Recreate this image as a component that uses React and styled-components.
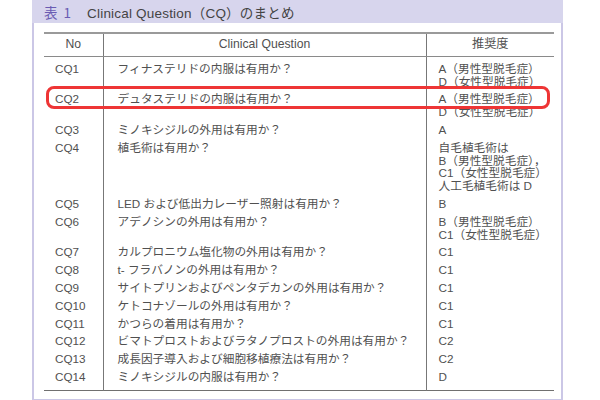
import React from "react";
import styled, { createGlobalStyle } from "styled-components";

const Global = createGlobalStyle`
  html, body { margin: 0; padding: 0; background: #fff; }
  body { font-family: "Liberation Sans", "Noto Sans CJK JP", sans-serif; }
`;

const Frame = styled.div`
  box-sizing: border-box;
  margin-left: 32px;
  width: 531px;
  border: 2px solid #cbc7e6;
  border-top: none;
  background: #fff;
  padding-bottom: 8px;
`;

const TitleBar = styled.div`
  height: 23px;
  background: #d7d5ed;
  display: flex;
  align-items: center;
  margin: 0 -2px;
  padding-left: 12px;
  font-size: 13.5px;
  color: #444;
`;

const TitleNo = styled.span`
  color: #6a5bb2;
  margin-right: 16px;
  font-family: "Noto Sans CJK JP", sans-serif;
  word-spacing: 3px;
`;

const TitleText = styled.span`
  font-family: "Liberation Sans", "Noto Sans CJK JP", sans-serif;
  letter-spacing: 0.2px;
`;

const TableWrap = styled.div`
  position: relative;
  margin: 9px 7px 0 10px;
`;

const Table = styled.table`
  width: 510px;
  border-collapse: collapse;
  table-layout: fixed;
  font-size: 11.7px;
  color: #505050;
  line-height: 12.8px;
  border-top: 2px solid #9a9a9a;
  border-bottom: 1.5px solid #707070;
`;

const Th = styled.th`
  font-weight: 400;
  text-align: center;
  font-size: 12.2px;
  padding: 4px 0 5px;
  border-bottom: 1px solid #8a8a8a;
  & + & { border-left: 1px solid #777; }
`;

const Td = styled.td`
  vertical-align: top;
  padding: ${(p) => (p.$first ? "6px" : "2.5px")} 0 ${(p) => (p.$last ? "6.5px" : "2.5px")} ${(p) => p.$pl}px;
  & + & { border-left: 1px solid #777; }
  white-space: nowrap;
`;

const Line = styled.div``;

const Highlight = styled.div`
  position: absolute;
  left: 2px;
  top: 54px;
  width: 504px;
  height: 23px;
  box-sizing: border-box;
  border: 3px solid #ee3535;
  border-radius: 8px;
  pointer-events: none;
`;

const rows = [
  ["CQ1", "フィナステリドの内服は有用か？", ["A（男性型脱毛症）", "D（女性型脱毛症）"]],
  ["CQ2", "デュタステリドの内服は有用か？", ["A（男性型脱毛症）", "D（女性型脱毛症）"]],
  ["CQ3", "ミノキシジルの外用は有用か？", ["A"]],
  ["CQ4", "植毛術は有用か？", ["自毛植毛術は", "B（男性型脱毛症），", "C1（女性型脱毛症）", "人工毛植毛術は D"]],
  ["CQ5", "LED および低出力レーザー照射は有用か？", ["B"]],
  ["CQ6", "アデノシンの外用は有用か？", ["B（男性型脱毛症）", "C1（女性型脱毛症）"]],
  ["CQ7", "カルプロニウム塩化物の外用は有用か？", ["C1"]],
  ["CQ8", "t- フラバノンの外用は有用か？", ["C1"]],
  ["CQ9", "サイトプリンおよびペンタデカンの外用は有用か？", ["C1"]],
  ["CQ10", "ケトコナゾールの外用は有用か？", ["C1"]],
  ["CQ11", "かつらの着用は有用か？", ["C1"]],
  ["CQ12", "ビマトプロストおよびラタノプロストの外用は有用か？", ["C2"]],
  ["CQ13", "成長因子導入および細胞移植療法は有用か？", ["C2"]],
  ["CQ14", "ミノキシジルの内服は有用か？", ["D"]],
];

export default function App() {
  return (
    <>
      <Global />
      <Frame>
        <TitleBar>
          <TitleNo>表 1</TitleNo>
          <TitleText>Clinical Question（CQ）のまとめ</TitleText>
        </TitleBar>
        <TableWrap>
          <Table>
            <colgroup>
              <col style={{ width: 59 }} />
              <col style={{ width: 323 }} />
              <col style={{ width: 128 }} />
            </colgroup>
            <thead>
              <tr>
                <Th>No</Th>
                <Th>Clinical Question</Th>
                <Th>推奨度</Th>
              </tr>
            </thead>
            <tbody>
              {rows.map(([no, q, rec], i) => {
                const first = i === 0;
                const last = i === rows.length - 1;
                return (
                  <tr key={no}>
                    <Td $pl={11} $first={first} $last={last}>{no}</Td>
                    <Td $pl={14} $first={first} $last={last}>{q}</Td>
                    <Td $pl={12} $first={first} $last={last}>
                      {rec.map((r) => (
                        <Line key={r}>{r}</Line>
                      ))}
                    </Td>
                  </tr>
                );
              })}
            </tbody>
          </Table>
          <Highlight />
        </TableWrap>
      </Frame>
    </>
  );
}
